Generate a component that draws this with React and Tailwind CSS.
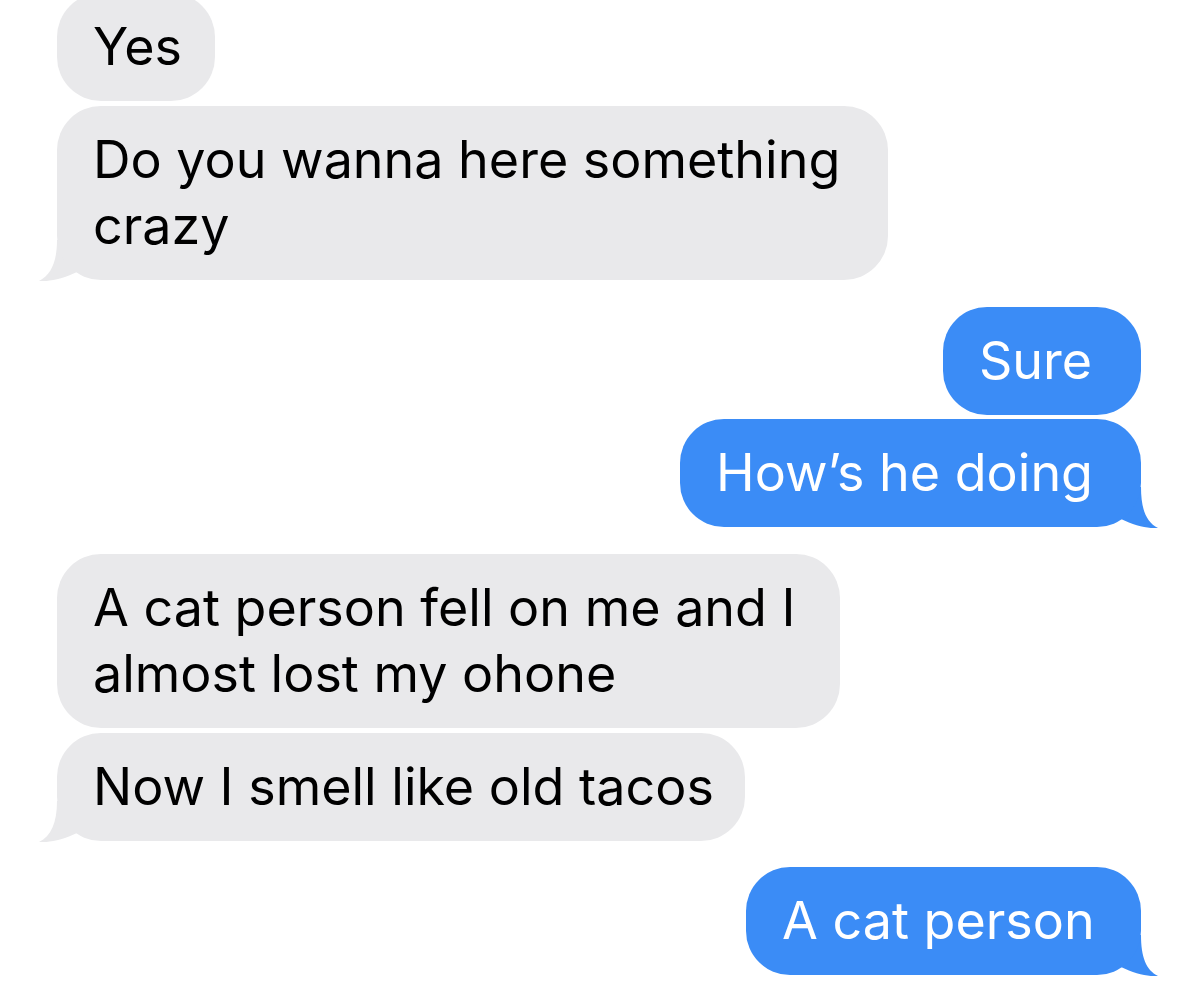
import React from "react";

function GrayTail() {
  return (
    <svg className="absolute bottom-[-1px] left-[-18px]" width="52" height="41" viewBox="0 0 52 41">
      <path d="M18 0 C18 22 12 35 0 41 C8 42 24 39 38 32 L52 32 L52 0 Z" fill="#e9e9eb" />
    </svg>
  );
}

function BlueTail() {
  return (
    <svg className="absolute bottom-[-1px] right-[-17px]" width="51" height="41" viewBox="0 0 51 41">
      <path d="M34 0 C34 22 39 35 51 41 C43 42 28 39 14 32 L0 32 L0 0 Z" fill="#3b8cf6" />
    </svg>
  );
}

function Gray({ children, w, tail, cls = "" }) {
  return (
    <div className={`relative self-start ${cls}`}>
      {tail && <GrayTail />}
      <div
        className="relative rounded-[44px] bg-[#e9e9eb] py-[21px] pl-[36px] text-[52px] leading-[66px] text-black"
        style={{ width: w }}
      >
        {children}
      </div>
    </div>
  );
}

function Blue({ children, w, tail, cls = "" }) {
  return (
    <div className={`relative self-end ${cls}`}>
      {tail && <BlueTail />}
      <div
        className="relative rounded-[44px] bg-[#3b8cf6] py-[21px] pl-[36px] text-[52px] leading-[66px] text-white"
        style={{ width: w }}
      >
        {children}
      </div>
    </div>
  );
}

export default function App() {
  return (
    <div
      className="flex h-[997px] w-[1200px] flex-col overflow-hidden bg-white pl-[57px] pr-[59px]"
      style={{ fontFamily: "Inter, 'Liberation Sans', sans-serif" }}
    >
      <Gray w={158} cls="-mt-[7px]">Yes</Gray>
      <Gray w={831} tail cls="mt-[5px]">
        <span className="whitespace-nowrap">Do you wanna here something</span>
        <br />
        crazy
      </Gray>
      <Blue w={198} cls="mt-[27px]">Sure</Blue>
      <Blue w={461} tail cls="mt-[4px]">How’s he doing</Blue>
      <Gray w={783} cls="mt-[27px]">
        <span className="whitespace-nowrap">A cat person fell on me and I</span>
        <br />
        almost lost my ohone
      </Gray>
      <Gray w={688} tail cls="mt-[5px]">Now I smell like old tacos</Gray>
      <Blue w={395} tail cls="mt-[26px]">A cat person</Blue>
    </div>
  );
}
